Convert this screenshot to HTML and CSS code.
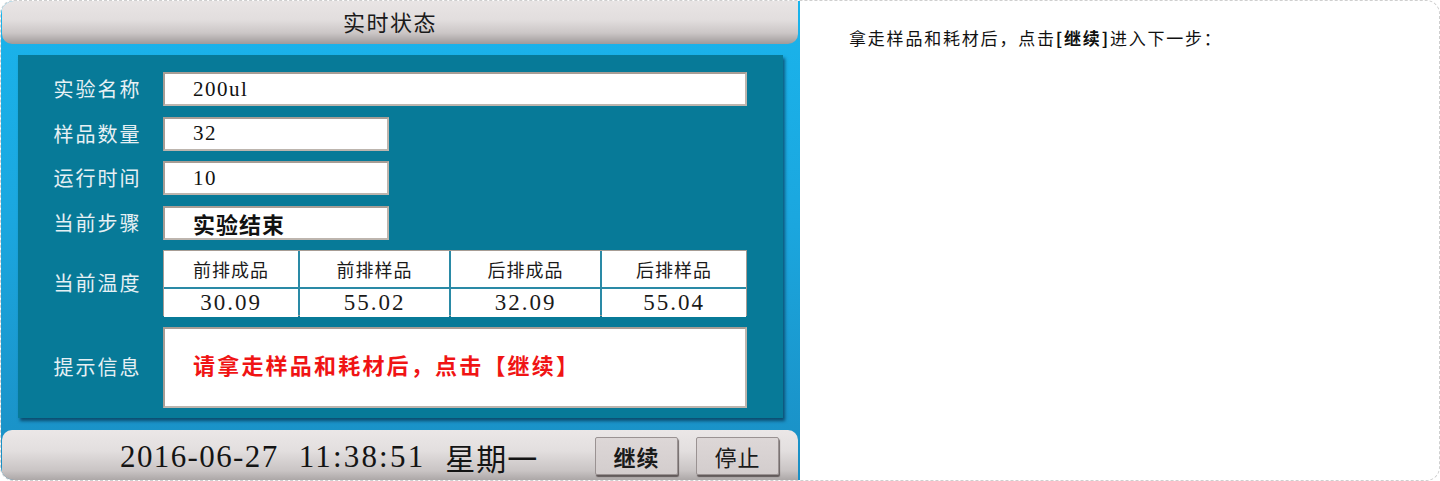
FILE: index.html
```html
<!DOCTYPE html>
<html lang="zh">
<head>
<meta charset="utf-8">
<title>实时状态</title>
<link rel="stylesheet" href="styles.css">
</head>
<body>
<div class="page">
  <div class="hmi">
    <div class="titlebar">实时状态</div>
    <div class="panel">
      <div class="label">实验名称</div>
      <div class="box wide"><span class="val">200ul</span></div>
      <div class="label">样品数量</div>
      <div class="box"><span class="val">32</span></div>
      <div class="label">运行时间</div>
      <div class="box"><span class="val">10</span></div>
      <div class="label">当前步骤</div>
      <div class="box"><span class="step">实验结束</span></div>
      <div class="label">当前温度</div>
      <div class="temps">
        <div class="th">前排成品</div>
        <div class="th">前排样品</div>
        <div class="th">后排成品</div>
        <div class="th">后排样品</div>
        <div class="td">30.09</div>
        <div class="td">55.02</div>
        <div class="td">32.09</div>
        <div class="td">55.04</div>
      </div>
      <div class="label">提示信息</div>
      <div class="box hint"><span class="msg">请拿走样品和耗材后，点击【继续】</span></div>
    </div>
    <div class="statusbar">
      <div class="clock"><span class="num">2016-06-27</span><span class="num">11:38:51</span><span class="day">星期一</span></div>
      <div class="buttons">
        <div class="btn strong">继续</div>
        <div class="btn">停止</div>
      </div>
    </div>
  </div>
  <div class="note">拿走样品和耗材后，点击<b>[继续]</b>进入下一步：</div>
</div>
</body>
</html>
```

FILE: styles.css
```css
* { box-sizing: border-box; }
html, body { margin: 0; padding: 0; background: #ffffff; }
.page {
  width: 1440px;
  height: 481px;
  border: 1px dashed #cfcfcf;
  border-radius: 14px;
  display: flex;
  overflow: hidden;
  font-family: "Noto Sans CJK SC", sans-serif;
}
.hmi {
  width: 800px;
  height: 481px;
  margin: -1px 0 -1px -1px;
  flex: none;
  background: linear-gradient(180deg, #1ab4ec 0%, #1ba7df 45%, #1a8ec3 100%);
  display: flex;
  flex-direction: column;
  padding: 0 2px;
}
.titlebar {
  height: 44px;
  background: linear-gradient(180deg, #e9e5e5 0%, #e2dede 45%, #cbc6c6 75%, #9f9a9a 100%);
  border-radius: 0 0 10px 10px;
  text-align: center;
  font-size: 22px;
  line-height: 42px;
  color: #1a1a1a;
  letter-spacing: 1.5px;
  padding-right: 20px;
}
.panel {
  margin: 11px 15px 0 16px;
  height: 363px;
  background: #077a98;
  box-shadow: 2px 3px 3px rgba(0, 20, 40, 0.55);
  padding: 17px 35px 0 0;
  display: grid;
  grid-template-columns: 145px 1fr;
  grid-template-rows: 34px 34px 34px 34px 66px 81px;
  row-gap: 10.5px;
  align-items: center;
}
.label {
  color: #e6f0f4;
  font-size: 20px;
  letter-spacing: 2px;
  line-height: 24px;
  padding-left: 14px;
  text-align: center;
}
.box {
  height: 34px;
  width: 226px;
  background: #ffffff;
  border: 2px solid #a79d95;
  border-right-color: #bdb5ae;
  border-bottom-color: #bdb5ae;
  display: flex;
  align-items: center;
  padding-left: 28px;
}
.box.wide { width: 584px; }
.val {
  font-family: "Liberation Serif", "Noto Sans CJK SC", serif;
  font-size: 21px;
  color: #111;
  letter-spacing: 1.5px;
}
.step {
  font-size: 22px;
  font-weight: 700;
  color: #111;
  letter-spacing: 1px;
}
.temps {
  height: 66px;
  width: 584px;
  display: grid;
  grid-template-columns: 134px 149px 149px 144px;
  grid-template-rows: 36px 28px;
  background: #2a8aa6;
  border: 1px solid #a79d95;
  gap: 2px;
  padding: 0;
}
.th, .td {
  background: #ffffff;
  display: flex;
  align-items: center;
  justify-content: center;
  color: #1a1a1a;
}
.th { font-size: 18px; letter-spacing: 1px; }
.td {
  font-family: "Liberation Serif", "Noto Sans CJK SC", serif;
  font-size: 23px;
  letter-spacing: 2px;
}
.box.hint {
  width: 584px;
  height: 81px;
  padding-left: 28px;
  padding-bottom: 6px;
}
.msg {
  color: #f01414;
  font-size: 22px;
  font-weight: 700;
  letter-spacing: 2.2px;
}
.statusbar {
  margin-top: 12px;
  height: 51px;
  background: linear-gradient(180deg, #ebe7e7 0%, #e3dfdf 40%, #c9c4c4 80%, #a9a4a4 100%);
  border-radius: 10px 10px 0 0;
  display: flex;
  align-items: center;
  padding-left: 118px;
}
.clock {
  display: flex;
  gap: 20px;
  font-family: "Liberation Serif", "Noto Sans CJK SC", serif;
  font-size: 31px;
  color: #141414;
  line-height: 36px;
  margin-top: 2px;
}
.num { letter-spacing: 1.4px; }
.num + .num { letter-spacing: 2.2px; }
.day { font-family: "Noto Sans CJK SC", sans-serif; font-size: 30px; line-height: 36px; letter-spacing: 1px; }
.buttons {
  display: flex;
  gap: 18px;
  margin-left: auto;
  margin-right: 19px;
}
.btn {
  width: 83px;
  height: 38px;
  background: linear-gradient(180deg, #ddd7d7 0%, #d3cdcd 100%);
  border: 1px solid #9a9292;
  box-shadow: 1px 2px 1px rgba(40, 30, 30, 0.6);
  border-radius: 2px;
  display: flex;
  align-items: center;
  justify-content: center;
  font-size: 22px;
  color: #1a1a1a;
  letter-spacing: 1px;
}
.btn.strong { font-weight: 700; }
.note {
  padding: 25px 0 0 49px;
  font-size: 17px;
  line-height: 24px;
  color: #111;
  letter-spacing: 1.8px;
}
.note b { font-weight: 700; }
```
